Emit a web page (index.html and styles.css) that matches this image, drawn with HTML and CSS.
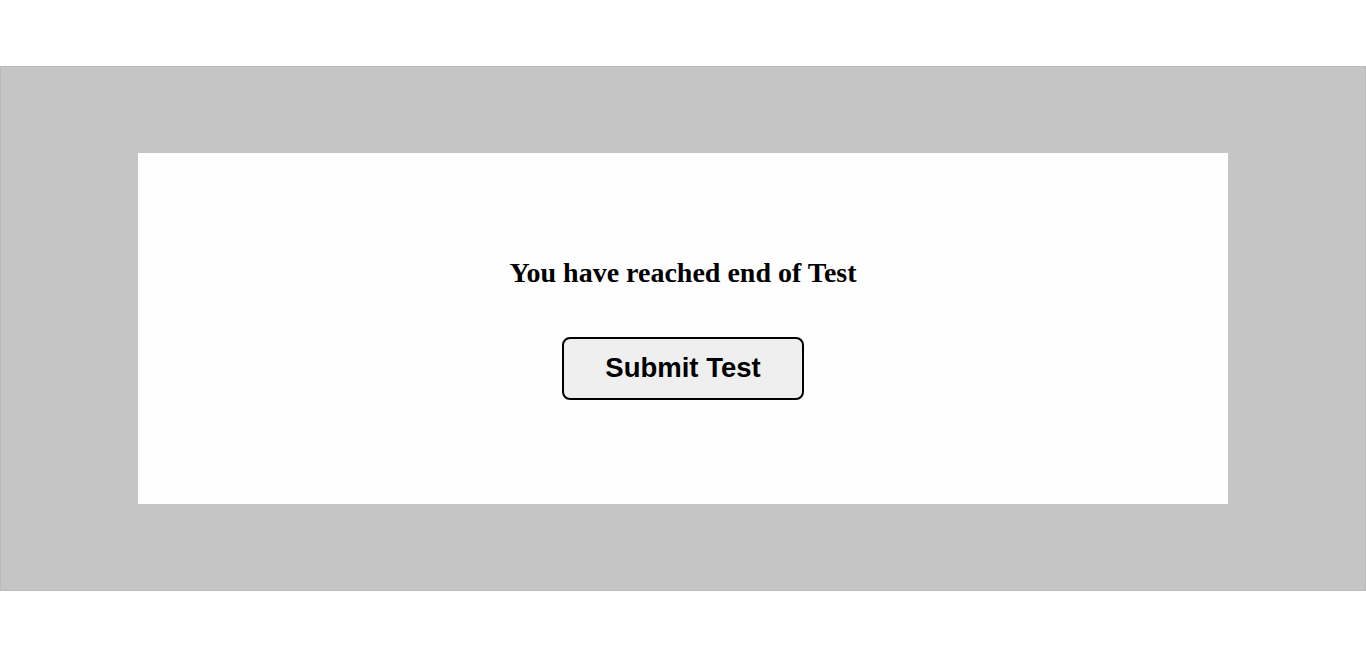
FILE: index.html
```html
<!DOCTYPE html>
<html>
<head>
<meta charset="utf-8">
<link rel="stylesheet" href="styles.css">
</head>
<body>
<div class="backdrop">
  <div class="panel">
    <h2 class="title">You have reached end of Test</h2>
    <button class="submit">Submit Test</button>
  </div>
</div>
</body>
</html>
```
FILE: styles.css
```css
html, body {
  margin: 0;
  padding: 0;
  background: #ffffff;
}
.backdrop {
  margin-top: 66px;
  height: 525px;
  box-sizing: border-box;
  background: #c6c5c6;
  border: 1px solid #bbbabb;
  padding: 86px 137px;
}
.panel {
  background: #fefefe;
  height: 351px;
  display: flex;
  flex-direction: column;
  align-items: center;
  padding-top: 100px;
  box-sizing: border-box;
}
.title {
  margin: 0;
  font-family: "Liberation Serif", "Times New Roman", serif;
  font-weight: bold;
  font-size: 28px;
  line-height: 40px;
  color: #000;
}
.submit {
  margin-top: 44px;
  width: 242px;
  height: 63px;
  background: #efefef;
  border: 2px solid #000;
  border-radius: 8px;
  font-family: "Liberation Sans", Arial, sans-serif;
  font-weight: bold;
  font-size: 27.5px;
  color: #000;
  padding: 0 0 2px;
}
```
